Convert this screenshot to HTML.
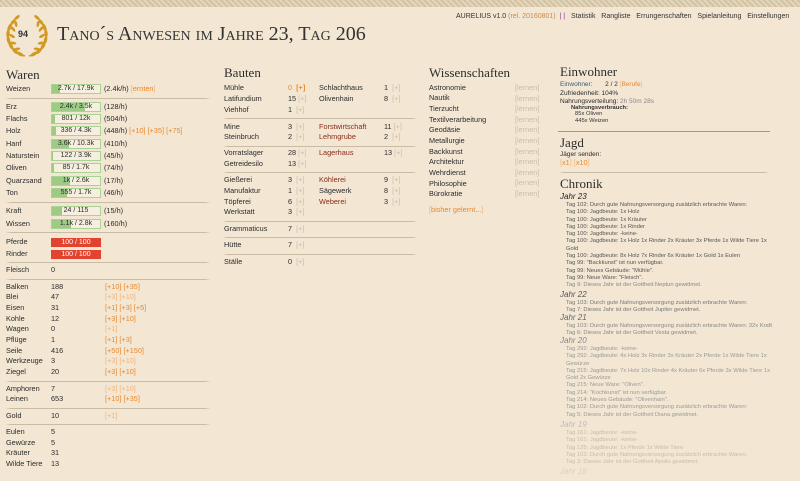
<!DOCTYPE html>
<html><head><meta charset="utf-8"><style>
*{margin:0;padding:0;box-sizing:border-box}
body{width:800px;height:481px;overflow:hidden;background:#f3e7d4;font-family:"Liberation Sans",sans-serif;color:#2b2b2b;position:relative;font-size:7.3px}
.t{position:absolute;line-height:10px;white-space:nowrap}
.o{color:#e8872a}.og{color:#f0b27a}.g{color:#c9bda9}.b{color:#2a3a5a}
.h{position:absolute;font-family:"Liberation Serif",serif;font-size:13px;color:#2d2d2d;line-height:14px}
.hr{position:absolute;height:1px;background:linear-gradient(90deg,transparent,#c9bca4 3%,#c9bca4 97%,transparent);}
.bar{position:absolute;width:50px;height:10px;border:1px solid #a9d295;background:#f6efe0;font-size:7px;line-height:8px;text-align:center;overflow:hidden}
.bar i{position:absolute;left:0;top:0;bottom:0;background:#9dcb86}
.bar span{position:relative}
.red{position:absolute;width:50px;height:9px;background:#e2432e;color:#fff;font-size:7px;line-height:9px;text-align:center}
.c{position:absolute;font-size:5.8px;line-height:7.3px;white-space:nowrap;color:#6a6a6a}
</style></head><body>
<div style="position:absolute;left:0;top:0;width:800px;height:7px;background:repeating-linear-gradient(45deg,#d3c3a2 0 2px,#e2d6bd 2px 4px)"></div>

<!-- laurel -->
<svg style="position:absolute;left:4px;top:13px" width="46" height="44" viewBox="0 0 46 44">
<g id="lb" fill="#d29a22">
<path d="M21 43 C10 40 4 32 4 22 C4 16 7 11 11 8" fill="none" stroke="#d29a22" stroke-width="1.6"/>
<ellipse cx="16" cy="41" rx="1.7" ry="4" transform="rotate(-60 16 41)"/>
<ellipse cx="11" cy="38" rx="1.7" ry="4" transform="rotate(-45 11 38)"/>
<ellipse cx="7" cy="33" rx="1.7" ry="4" transform="rotate(-30 7 33)"/>
<ellipse cx="4.5" cy="27" rx="1.7" ry="4" transform="rotate(-12 4.5 27)"/>
<ellipse cx="4" cy="20.5" rx="1.7" ry="4" transform="rotate(5 4 20.5)"/>
<ellipse cx="5.5" cy="14.5" rx="1.7" ry="4" transform="rotate(22 5.5 14.5)"/>
<ellipse cx="9" cy="9" rx="1.6" ry="3.6" transform="rotate(40 9 9)"/>
<ellipse cx="13" cy="4.5" rx="1.5" ry="3.4" transform="rotate(50 13 4.5)"/>
<ellipse cx="13" cy="36" rx="1.4" ry="3.3" transform="rotate(-100 13 36)"/>
<ellipse cx="9" cy="30" rx="1.4" ry="3.3" transform="rotate(-80 9 30)"/>
<ellipse cx="8" cy="23" rx="1.4" ry="3.3" transform="rotate(-60 8 23)"/>
<ellipse cx="9" cy="16" rx="1.4" ry="3.3" transform="rotate(-40 9 16)"/>
<ellipse cx="12" cy="11" rx="1.4" ry="3.1" transform="rotate(-10 12 11)"/>
</g>
<use href="#lb" transform="translate(46 0) scale(-1 1)"/>
</svg>
<div class="t" style="left:18px;top:29px;font-size:9px;font-weight:bold;color:#333">94</div>
<div class="t" style="left:57px;top:22px;font-family:'Liberation Serif',serif;font-size:20px;line-height:24px;font-variant:small-caps;color:#333">Tano´s Anwesen im Jahre 23, Tag 206</div>

<div class="t" style="left:456px;top:12px;font-size:7px;color:#333">AURELIUS v1.0 <span style="color:#c98a4a">(rel. 20160801)</span> &nbsp;<span style="color:#7a3a8a">| |</span> &nbsp; Statistik &nbsp; Rangliste &nbsp; Errungenschaften &nbsp; Spielanleitung &nbsp; Einstellungen</div>

<!-- Waren -->
<div class="h" style="left:6px;top:68px">Waren</div>
<div class="t" style="left:6px;top:84px">Weizen</div>
<div class="bar" style="left:51px;top:84px"><i style="width:16%"></i><span>2.7k / 17.9k</span></div>
<div class="t" style="left:104px;top:84px">(2.4k/h) <span class="og">[</span><span class="o">ernten</span><span class="og">]</span></div>
<div class="hr" style="left:5px;top:98px;width:206px"></div>
<div class="t" style="left:6px;top:102px">Erz</div><div class="bar" style="left:51px;top:102px"><i style="width:68%"></i><span>2.4k / 3.5k</span></div><div class="t" style="left:104px;top:102px">(128/h)</div>
<div class="t" style="left:6px;top:114px">Flachs</div><div class="bar" style="left:51px;top:114px"><i style="width:7%"></i><span>801 / 12k</span></div><div class="t" style="left:104px;top:114px">(504/h)</div>
<div class="t" style="left:6px;top:126px">Holz</div><div class="bar" style="left:51px;top:126px"><i style="width:8%"></i><span>336 / 4.3k</span></div><div class="t" style="left:104px;top:126px">(448/h) <span class="o">[+10] [+35] [+75]</span></div>
<div class="t" style="left:6px;top:139px">Hanf</div><div class="bar" style="left:51px;top:139px"><i style="width:35%"></i><span>3.6k / 10.3k</span></div><div class="t" style="left:104px;top:139px">(410/h)</div>
<div class="t" style="left:6px;top:151px">Naturstein</div><div class="bar" style="left:51px;top:151px"><i style="width:3%"></i><span>122 / 3.9k</span></div><div class="t" style="left:104px;top:151px">(45/h)</div>
<div class="t" style="left:6px;top:163px">Oliven</div><div class="bar" style="left:51px;top:163px"><i style="width:5%"></i><span>85 / 1.7k</span></div><div class="t" style="left:104px;top:163px">(74/h)</div>
<div class="t" style="left:6px;top:176px">Quarzsand</div><div class="bar" style="left:51px;top:176px"><i style="width:38%"></i><span>1k / 2.6k</span></div><div class="t" style="left:104px;top:176px">(17/h)</div>
<div class="t" style="left:6px;top:188px">Ton</div><div class="bar" style="left:51px;top:188px"><i style="width:32%"></i><span>555 / 1.7k</span></div><div class="t" style="left:104px;top:188px">(46/h)</div>
<div class="hr" style="left:5px;top:202px;width:206px"></div>
<div class="t" style="left:6px;top:206px">Kraft</div><div class="bar" style="left:51px;top:206px"><i style="width:21%"></i><span>24 / 115</span></div><div class="t" style="left:104px;top:206px">(15/h)</div>
<div class="t" style="left:6px;top:219px">Wissen</div><div class="bar" style="left:51px;top:219px"><i style="width:39%"></i><span>1.1k / 2.8k</span></div><div class="t" style="left:104px;top:219px">(160/h)</div>
<div class="hr" style="left:5px;top:232px;width:206px"></div>
<div class="t" style="left:6px;top:237px">Pferde</div><div class="red" style="left:51px;top:238px">100 / 100</div>
<div class="t" style="left:6px;top:249px">Rinder</div><div class="red" style="left:51px;top:250px">100 / 100</div>
<div class="hr" style="left:5px;top:262px;width:206px"></div>
<div class="t" style="left:6px;top:265px">Fleisch</div><div class="t" style="left:51px;top:265px">0</div>
<div class="hr" style="left:5px;top:279px;width:206px"></div>
<div class="t" style="left:6px;top:282px">Balken</div><div class="t" style="left:51px;top:282px">188</div><div class="t o" style="left:105px;top:282px">[+10] [+35]</div>
<div class="t" style="left:6px;top:292px">Blei</div><div class="t" style="left:51px;top:292px">47</div><div class="t og" style="left:105px;top:292px">[+3] [+10]</div>
<div class="t" style="left:6px;top:303px">Eisen</div><div class="t" style="left:51px;top:303px">31</div><div class="t o" style="left:105px;top:303px">[+1] [+3] [+5]</div>
<div class="t" style="left:6px;top:314px">Kohle</div><div class="t" style="left:51px;top:314px">12</div><div class="t o" style="left:105px;top:314px">[+3] [+10]</div>
<div class="t" style="left:6px;top:324px">Wagen</div><div class="t" style="left:51px;top:324px">0</div><div class="t og" style="left:105px;top:324px">[+1]</div>
<div class="t" style="left:6px;top:335px">Pflüge</div><div class="t" style="left:51px;top:335px">1</div><div class="t o" style="left:105px;top:335px">[+1] [+3]</div>
<div class="t" style="left:6px;top:346px">Seile</div><div class="t" style="left:51px;top:346px">416</div><div class="t o" style="left:105px;top:346px">[+50] [+150]</div>
<div class="t" style="left:6px;top:356px">Werkzeuge</div><div class="t" style="left:51px;top:356px">3</div><div class="t og" style="left:105px;top:356px">[+3] [+10]</div>
<div class="t" style="left:6px;top:367px">Ziegel</div><div class="t" style="left:51px;top:367px">20</div><div class="t o" style="left:105px;top:367px">[+3] [+10]</div>
<div class="hr" style="left:5px;top:381px;width:206px"></div>
<div class="t" style="left:6px;top:384px">Amphoren</div><div class="t" style="left:51px;top:384px">7</div><div class="t og" style="left:105px;top:384px">[+3] [+10]</div>
<div class="t" style="left:6px;top:394px">Leinen</div><div class="t" style="left:51px;top:394px">653</div><div class="t o" style="left:105px;top:394px">[+10] [+35]</div>
<div class="hr" style="left:5px;top:408px;width:206px"></div>
<div class="t" style="left:6px;top:411px">Gold</div><div class="t" style="left:51px;top:411px">10</div><div class="t og" style="left:105px;top:411px">[+1]</div>
<div class="hr" style="left:5px;top:424px;width:206px"></div>
<div class="t" style="left:6px;top:427px">Eulen</div><div class="t" style="left:51px;top:427px">5</div>
<div class="t" style="left:6px;top:438px">Gewürze</div><div class="t" style="left:51px;top:438px">5</div>
<div class="t" style="left:6px;top:448px">Kräuter</div><div class="t" style="left:51px;top:448px">31</div>
<div class="t" style="left:6px;top:459px">Wilde Tiere</div><div class="t" style="left:51px;top:459px">13</div>

<!-- Bauten -->
<div class="h" style="left:224px;top:66px">Bauten</div>
<div class="t" style="left:224px;top:83px">Mühle</div><div class="t o" style="left:288px;top:83px">0 &nbsp;<b>[+]</b></div>
<div class="t" style="left:224px;top:94px">Latifundium</div><div class="t" style="left:288px;top:94px">15 <span class="g">[+]</span></div>
<div class="t" style="left:224px;top:105px">Viehhof</div><div class="t" style="left:288px;top:105px">1 &nbsp;<span class="g">[+]</span></div>
<div class="t" style="left:319px;top:83px">Schlachthaus</div><div class="t" style="left:384px;top:83px">1 &nbsp;<span class="g">[+]</span></div>
<div class="t" style="left:319px;top:94px">Olivenhain</div><div class="t" style="left:384px;top:94px">8 &nbsp;<span class="g">[+]</span></div>
<div class="hr" style="left:222px;top:118px;width:196px"></div>
<div class="t" style="left:224px;top:122px">Mine</div><div class="t" style="left:288px;top:122px">3 &nbsp;<span class="g">[+]</span></div>
<div class="t" style="left:224px;top:132px">Steinbruch</div><div class="t" style="left:288px;top:132px">2 &nbsp;<span class="g">[+]</span></div>
<div class="t" style="left:319px;top:122px;color:#8a2a1a">Forstwirtschaft</div><div class="t" style="left:384px;top:122px">11 <span class="g">[+]</span></div>
<div class="t" style="left:319px;top:132px;color:#8a2a1a">Lehmgrube</div><div class="t" style="left:384px;top:132px">2 &nbsp;<span class="g">[+]</span></div>
<div class="hr" style="left:222px;top:146px;width:196px"></div>
<div class="t" style="left:224px;top:148px">Vorratslager</div><div class="t" style="left:288px;top:148px">28 <span class="g">[+]</span></div>
<div class="t" style="left:224px;top:159px">Getreidesilo</div><div class="t" style="left:288px;top:159px">13 <span class="g">[+]</span></div>
<div class="t" style="left:319px;top:148px;color:#8a2a1a">Lagerhaus</div><div class="t" style="left:384px;top:148px">13 <span class="g">[+]</span></div>
<div class="hr" style="left:222px;top:172px;width:196px"></div>
<div class="t" style="left:224px;top:175px">Gießerei</div><div class="t" style="left:288px;top:175px">3 &nbsp;<span class="g">[+]</span></div>
<div class="t" style="left:224px;top:186px">Manufaktur</div><div class="t" style="left:288px;top:186px">1 &nbsp;<span class="g">[+]</span></div>
<div class="t" style="left:224px;top:197px">Töpferei</div><div class="t" style="left:288px;top:197px">6 &nbsp;<span class="g">[+]</span></div>
<div class="t" style="left:224px;top:207px">Werkstatt</div><div class="t" style="left:288px;top:207px">3 &nbsp;<span class="g">[+]</span></div>
<div class="t" style="left:319px;top:175px;color:#8a2a1a">Köhlerei</div><div class="t" style="left:384px;top:175px">9 &nbsp;<span class="g">[+]</span></div>
<div class="t" style="left:319px;top:186px">Sägewerk</div><div class="t" style="left:384px;top:186px">8 &nbsp;<span class="g">[+]</span></div>
<div class="t" style="left:319px;top:197px;color:#8a2a1a">Weberei</div><div class="t" style="left:384px;top:197px">3 &nbsp;<span class="g">[+]</span></div>
<div class="hr" style="left:222px;top:221px;width:196px"></div>
<div class="t" style="left:224px;top:224px">Grammaticus</div><div class="t" style="left:288px;top:224px">7 &nbsp;<span class="g">[+]</span></div>
<div class="hr" style="left:222px;top:237px;width:196px"></div>
<div class="t" style="left:224px;top:240px">Hütte</div><div class="t" style="left:288px;top:240px">7 &nbsp;<span class="g">[+]</span></div>
<div class="hr" style="left:222px;top:254px;width:196px"></div>
<div class="t" style="left:224px;top:257px">Ställe</div><div class="t" style="left:288px;top:257px">0 &nbsp;<span class="g">[+]</span></div>

<!-- Wissenschaften -->
<div class="h" style="left:429px;top:66px">Wissenschaften</div>
<div class="t" style="left:429px;top:83px">Astronomie</div>
<div class="t" style="left:429px;top:93px">Nautik</div>
<div class="t" style="left:429px;top:104px">Tierzucht</div>
<div class="t" style="left:429px;top:115px">Textilverarbeitung</div>
<div class="t" style="left:429px;top:125px">Geodäsie</div>
<div class="t" style="left:429px;top:136px">Metallurgie</div>
<div class="t" style="left:429px;top:147px">Backkunst</div>
<div class="t" style="left:429px;top:157px">Architektur</div>
<div class="t" style="left:429px;top:168px">Wehrdienst</div>
<div class="t" style="left:429px;top:179px">Philosophie</div>
<div class="t" style="left:429px;top:189px">Bürokratie</div>
<div class="t g" style="left:515px;top:83px;line-height:10.6px">[lernen]<br>[lernen]<br>[lernen]<br>[lernen]<br>[lernen]<br>[lernen]<br>[lernen]<br>[lernen]<br>[lernen]<br>[lernen]<br>[lernen]</div>
<div class="t" style="left:429px;top:205px"><span class="og">[</span><span class="o">bisher gelernt...</span><span class="og">]</span></div>

<!-- Einwohner -->
<div class="h" style="left:560px;top:65px">Einwohner</div>
<div class="t" style="left:560px;top:80px;font-size:6.5px"><span style="color:#3a5a7a">Einwohner:</span> &nbsp; &nbsp; &nbsp; 2 / 2 <span class="og">[</span><span class="o">Berufe</span><span class="og">]</span></div>
<div class="t" style="left:560px;top:89px;font-size:6.5px">Zufriedenheit: 104%</div>
<div class="t" style="left:560px;top:97px;font-size:6.5px">Nahrungsverteilung: <span style="color:#888">2h 50m 28s</span></div>
<div class="c" style="left:571px;top:105px;color:#333;font-weight:bold">Nahrungsverbrauch:</div>
<div class="c" style="left:575px;top:111px;color:#333">85x Oliven<br>445x Weizen</div>
<div class="hr" style="left:558px;top:131px;width:212px;background:#a59a85;height:1px"></div>
<div class="h" style="left:560px;top:136px">Jagd</div>
<div class="t" style="left:560px;top:150px;font-size:6.5px">Jäger senden:</div>
<div class="t" style="left:560px;top:158px"><span class="og">[</span><span class="o">x1</span><span class="og">] [</span><span class="o">x10</span><span class="og">]</span></div>
<div class="hr" style="left:558px;top:172px;width:212px"></div>
<div class="h" style="left:560px;top:177px">Chronik</div>
<div class="t" style="left:560px;top:192px;font-style:italic;font-size:8px;color:#222">Jahr 23</div>
<div class="c" style="left:566px;top:202px;color:#555">Tag 102: Durch gute Nahrungsversorgung zusätzlich erbrachte Waren:<br>Tag 100: Jagdbeute: 1x Holz<br>Tag 100: Jagdbeute: 1x Kräuter<br>Tag 100: Jagdbeute: 1x Rinder<br>Tag 100: Jagdbeute: -keine-<br>Tag 100: Jagdbeute: 1x Holz 1x Rinder 2x Kräuter 3x Pferde 1x Wilde Tiere 1x<br>Gold<br>Tag 100: Jagdbeute: 8x Holz 7x Rinder 6x Kräuter 1x Gold 1x Eulen<br>Tag 99: "Backkunst" ist nun verfügbar.<br>Tag 99: Neues Gebäude: "Mühle".<br>Tag 99: Neue Ware: "Fleisch".<br><span style="color:#888">Tag 9: Dieses Jahr ist der Gottheit Neptun gewidmet.</span></div>
<div class="t" style="left:560px;top:290px;font-style:italic;font-size:8px;color:#555">Jahr 22</div>
<div class="c" style="left:566px;top:300px;color:#777">Tag 103: Durch gute Nahrungsversorgung zusätzlich erbrachte Waren:<br>Tag 7: Dieses Jahr ist der Gottheit Jupiter gewidmet.</div>
<div class="t" style="left:560px;top:313px;font-style:italic;font-size:8px;color:#666">Jahr 21</div>
<div class="c" style="left:566px;top:323px;color:#888">Tag 103: Durch gute Nahrungsversorgung zusätzlich erbrachte Waren: 32x Kraft<br>Tag 6: Dieses Jahr ist der Gottheit Vesta gewidmet.</div>
<div class="t" style="left:560px;top:336px;font-style:italic;font-size:8px;color:#888">Jahr 20</div>
<div class="c" style="left:566px;top:346px;color:#999">Tag 292: Jagdbeute: -keine-<br>Tag 292: Jagdbeute: 4x Holz 3x Rinder 3x Kräuter 2x Pferde 1x Wilde Tiere 1x<br>Gewürze<br>Tag 215: Jagdbeute: 7x Holz 10x Rinder 4x Kräuter 6x Pferde 3x Wilde Tiere 1x<br>Gold 2x Gewürze<br>Tag 215: Neue Ware: "Oliven".<br>Tag 214: "Kochkunst" ist nun verfügbar.<br>Tag 214: Neues Gebäude: "Olivenhain".<br>Tag 102: Durch gute Nahrungsversorgung zusätzlich erbrachte Waren:<br>Tag 5: Dieses Jahr ist der Gottheit Diana gewidmet.</div>
<div class="t" style="left:560px;top:420px;font-style:italic;font-size:8px;color:#bbb">Jahr 19</div>
<div class="c" style="left:566px;top:430px;color:#c8bca8">Tag 161: Jagdbeute: -keine-<br>Tag 161: Jagdbeute: -keine-<br>Tag 125: Jagdbeute: 1x Pferde 1x Wilde Tiere<br>Tag 102: Durch gute Nahrungsversorgung zusätzlich erbrachte Waren:<br>Tag 3: Dieses Jahr ist der Gottheit Apollo gewidmet.</div>
<div class="t" style="left:560px;top:467px;font-style:italic;font-size:8px;color:#ddd2c0">Jahr 18</div>
</body></html>
